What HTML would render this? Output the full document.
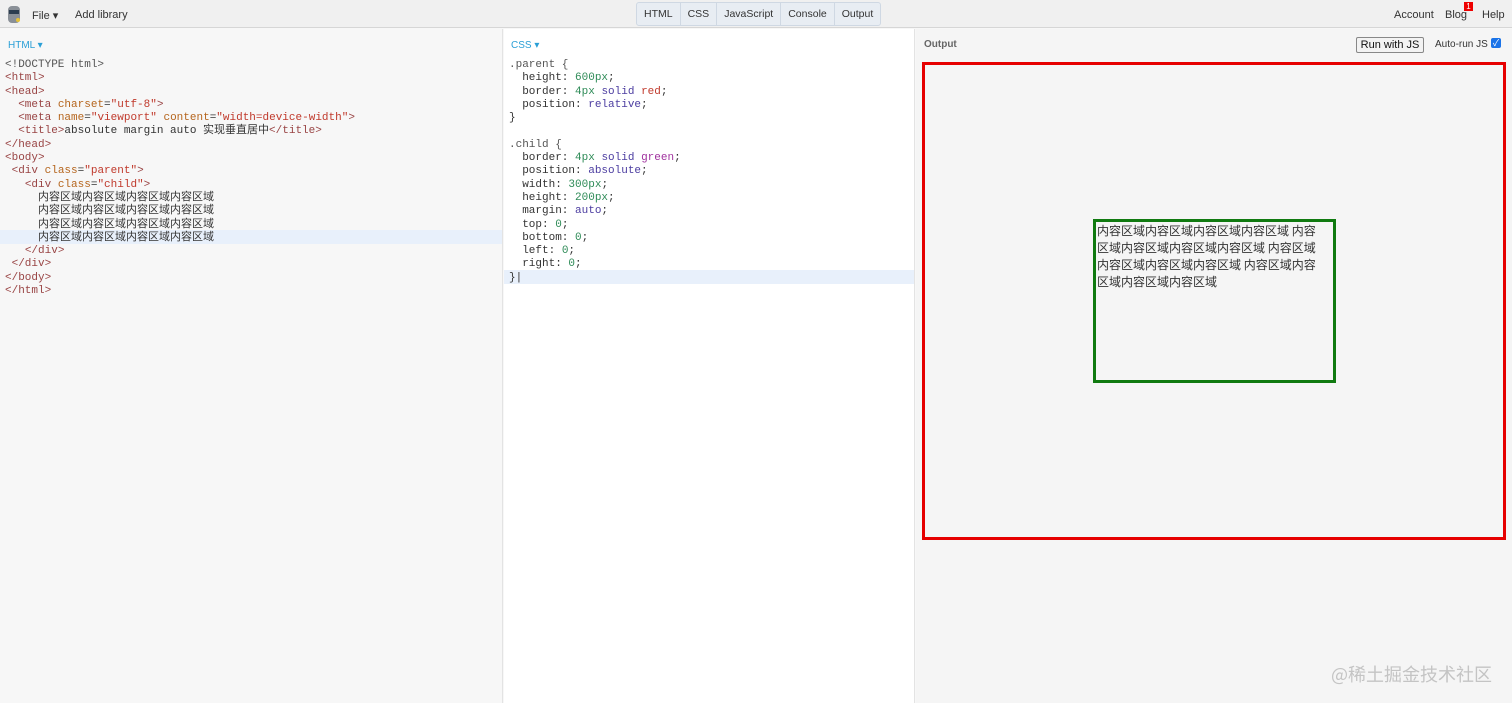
<!DOCTYPE html>
<html><head><meta charset="utf-8"><style>
*{margin:0;padding:0;box-sizing:border-box}
body{width:1512px;height:703px;overflow:hidden;background:#f7f7f7;font-family:"Liberation Sans","Noto Sans CJK SC",sans-serif;position:relative}
.top{position:absolute;left:0;top:0;width:1512px;height:28px;background:#f0f0f0;border-bottom:1px solid #d6d6d6;font-size:11px;color:#333}
.top span{position:absolute;top:9px}
.tabs{position:absolute;left:636px;top:2px;height:24px;display:flex;border:1px solid #cfd8e3;border-radius:3px;background:#e8edf3}
.tabs div{padding:0 7px;line-height:23px;font-size:10.5px;color:#333;border-right:1px solid #cfd8e3}
.tabs div:last-child{border-right:none}
.panel{position:absolute;top:29px;bottom:0}
.code{position:absolute;font-family:"Liberation Mono","Noto Sans CJK SC",monospace;font-size:11px;line-height:13.3px;white-space:pre;color:#333}
.t{color:#994444}.a{color:#b5651d}.s{color:#c0392b}.n{color:#2e8b57}.k{color:#4b3ca0}.g{color:#555}
.lbl{position:absolute;font-size:10px;color:#2a9fd6;top:11px}
</style></head><body>
<div class="top">
<svg style="position:absolute;left:7px;top:5px" width="14" height="19" viewBox="0 0 14 19"><rect x="1" y="1" width="12" height="17" rx="4" fill="#8a9097"/><rect x="2" y="5" width="10" height="4" fill="#2c3e50"/><circle cx="11" cy="15" r="2" fill="#e5c23a"/></svg>
<span style="left:32px">File ▾</span><span style="left:75px">Add library</span>
<span style="left:1394px">Account</span><span style="left:1445px">Blog</span><span style="left:1482px">Help</span>
<div style="position:absolute;left:1464px;top:2px;width:9px;height:9px;background:#e00;color:#fff;font-size:8px;line-height:9px;text-align:center">1</div>
</div>
<div class="tabs"><div>HTML</div><div>CSS</div><div>JavaScript</div><div>Console</div><div>Output</div></div>

<div class="panel" style="left:0;width:503px;background:#f7f7f7;border-right:1px solid #e3e3e3">
<div class="lbl" style="left:8px">HTML ▾</div>
<div style="position:absolute;left:0;right:0;top:201px;height:14px;background:#e8f0fb"></div>
<div class="code" style="left:5px;top:30px"><span class="g">&lt;!DOCTYPE html&gt;</span>
<span class="t">&lt;html&gt;</span>
<span class="t">&lt;head&gt;</span>
  <span class="t">&lt;meta</span> <span class="a">charset</span>=<span class="s">"utf-8"</span><span class="t">&gt;</span>
  <span class="t">&lt;meta</span> <span class="a">name</span>=<span class="s">"viewport"</span> <span class="a">content</span>=<span class="s">"width=device-width"</span><span class="t">&gt;</span>
  <span class="t">&lt;title&gt;</span>absolute margin auto 实现垂直居中<span class="t">&lt;/title&gt;</span>
<span class="t">&lt;/head&gt;</span>
<span class="t">&lt;body&gt;</span>
 <span class="t">&lt;div</span> <span class="a">class</span>=<span class="s">"parent"</span><span class="t">&gt;</span>
   <span class="t">&lt;div</span> <span class="a">class</span>=<span class="s">"child"</span><span class="t">&gt;</span>
     内容区域内容区域内容区域内容区域
     内容区域内容区域内容区域内容区域
     内容区域内容区域内容区域内容区域
     内容区域内容区域内容区域内容区域
   <span class="t">&lt;/div&gt;</span>
 <span class="t">&lt;/div&gt;</span>
<span class="t">&lt;/body&gt;</span>
<span class="t">&lt;/html&gt;</span></div>
</div>

<div class="panel" style="left:504px;width:411px;background:#fff;border-right:1px solid #e3e3e3">
<div class="lbl" style="left:7px">CSS ▾</div>
<div style="position:absolute;left:0;right:0;top:241px;height:14px;background:#e8f0fb"></div>
<div class="code" style="left:5px;top:30px"><span class="g">.parent {</span>
  height: <span class="n">600px</span>;
  border: <span class="n">4px</span> <span class="k">solid</span> <span class="s">red</span>;
  position: <span class="k">relative</span>;
}

<span class="g">.child {</span>
  border: <span class="n">4px</span> <span class="k">solid</span> <span class="s" style="color:#a0329e">green</span>;
  position: <span class="k">absolute</span>;
  width: <span class="n">300px</span>;
  height: <span class="n">200px</span>;
  margin: <span class="k">auto</span>;
  top: <span class="n">0</span>;
  bottom: <span class="n">0</span>;
  left: <span class="n">0</span>;
  right: <span class="n">0</span>;
}|</div>
</div>

<div class="panel" style="left:916px;width:596px;background:#f5f5f5">
<div style="position:absolute;left:8px;top:10px;font-size:10px;font-weight:bold;color:#666">Output</div>
<div style="position:absolute;left:440px;top:8px;width:68px;height:16px;border:1px solid #888;border-radius:2px;background:#f3f3f3;font-size:11px;text-align:center;line-height:14px;color:#111">Run with JS</div>
<div style="position:absolute;left:519px;top:10px;font-size:10px;color:#333">Auto-run JS</div>
<div style="position:absolute;left:575px;top:9px;width:10px;height:10px;background:#1a73e8;border-radius:2px;color:#fff;font-size:9px;line-height:10px;text-align:center">✓</div>
<div style="position:absolute;left:6px;top:33px;width:584px;height:478px;border:3px solid #e60000"></div>
<div style="position:absolute;left:177px;top:190px;width:243px;height:164px;border:3px solid #107a10;font-size:12px;line-height:17px;color:#333;padding:0 8px 0 1px;font-family:'Noto Sans CJK SC',sans-serif">内容区域内容区域内容区域内容区域 内容区域内容区域内容区域内容区域 内容区域内容区域内容区域内容区域 内容区域内容区域内容区域内容区域</div>
<div style="position:absolute;left:415px;top:632px;font-size:18px;color:#c4c4c4;font-family:'Noto Sans CJK SC',sans-serif">@稀土掘金技术社区</div>
</div>
</body></html>
